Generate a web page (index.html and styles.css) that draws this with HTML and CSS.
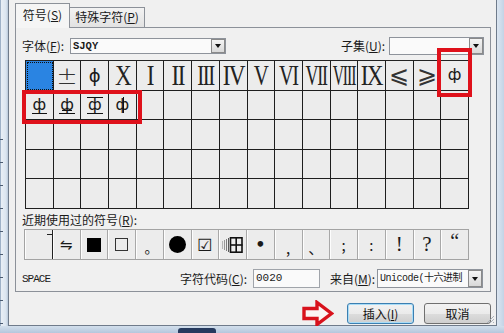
FILE: index.html
```html
<!DOCTYPE html>
<html>
<head>
  <meta charset="utf-8">
  <title>符号</title>
  <link rel="stylesheet" href="styles.css">
</head>
<body>
  <div class="screen">
    <div class="ruler"></div>
    <div class="dialog">
      <div class="tabs">
        <div class="tab active">符号(<u>S</u>)</div>
        <div class="tab">特殊字符(<u>P</u>)</div>
      </div>
      <div class="page">
        <div class="font-row">
          <span class="lbl font-lbl">字体(<u>F</u>):</span>
          <div class="combo font-combo"><span class="combo-text">SJQY</span><span class="combo-btn"></span></div>
          <span class="lbl subset-lbl">子集(<u>U</u>):</span>
          <div class="combo subset-combo"><span class="combo-text"></span><span class="combo-btn"></span></div>
        </div>

        <div class="grid">
          <!-- row 1 -->
          <div class="cell sel"></div>
          <div class="cell"><span class="pm">±</span></div>
          <div class="cell"><span class="sphi">ϕ</span></div>
          <div class="cell"><span class="rn r-x">X</span></div>
          <div class="cell"><span class="rn r1">I</span></div>
          <div class="cell"><span class="rn r2">II</span></div>
          <div class="cell"><span class="rn r3">III</span></div>
          <div class="cell"><span class="rn r4">IV</span></div>
          <div class="cell"><span class="rn r5">V</span></div>
          <div class="cell"><span class="rn r6">VI</span></div>
          <div class="cell"><span class="rn r7">VII</span></div>
          <div class="cell"><span class="rn r8">VIII</span></div>
          <div class="cell"><span class="rn r9">IX</span></div>
          <div class="cell"><span class="cmp">⩽</span></div>
          <div class="cell"><span class="cmp">⩾</span></div>
          <div class="cell"><span class="phi">ф</span></div>
          <!-- row 2 -->
          <div class="cell"><span class="phi base">ф</span></div>
          <div class="cell"><span class="phi base bar">ф</span></div>
          <div class="cell"><span class="phi base top">ф</span></div>
          <div class="cell"><span class="phi dbl">ф</span></div>
          <div class="cell"></div><div class="cell"></div><div class="cell"></div><div class="cell"></div>
          <div class="cell"></div><div class="cell"></div><div class="cell"></div><div class="cell"></div>
          <div class="cell"></div><div class="cell"></div><div class="cell"></div><div class="cell"></div>
          <!-- rows 3-5 -->
          <div class="cell"></div><div class="cell"></div><div class="cell"></div><div class="cell"></div>
          <div class="cell"></div><div class="cell"></div><div class="cell"></div><div class="cell"></div>
          <div class="cell"></div><div class="cell"></div><div class="cell"></div><div class="cell"></div>
          <div class="cell"></div><div class="cell"></div><div class="cell"></div><div class="cell"></div>
          <div class="cell"></div><div class="cell"></div><div class="cell"></div><div class="cell"></div>
          <div class="cell"></div><div class="cell"></div><div class="cell"></div><div class="cell"></div>
          <div class="cell"></div><div class="cell"></div><div class="cell"></div><div class="cell"></div>
          <div class="cell"></div><div class="cell"></div><div class="cell"></div><div class="cell"></div>
          <div class="cell"></div><div class="cell"></div><div class="cell"></div><div class="cell"></div>
          <div class="cell"></div><div class="cell"></div><div class="cell"></div><div class="cell"></div>
          <div class="cell"></div><div class="cell"></div><div class="cell"></div><div class="cell"></div>
          <div class="cell"></div><div class="cell"></div><div class="cell"></div><div class="cell"></div>
        </div>

        <div class="recent-lbl">近期使用过的符号(<u>R</u>):</div>
        <div class="recent">
          <div class="rc first"><span class="corner"></span></div>
          <div class="rc"><span class="harp">⇋</span></div>
          <div class="rc"><span class="sq-fill"></span></div>
          <div class="rc"><span class="sq-open"></span></div>
          <div class="rc"><span class="dot-low">。</span></div>
          <div class="rc"><span class="disc"></span></div>
          <div class="rc"><span class="check">☑</span></div>
          <div class="rc">
            <svg class="tbl" width="21" height="16" viewBox="0 0 21 16">
              <g fill="#333">
                <rect x="0" y="4" width="1" height="8" opacity=".3"/>
                <rect x="2" y="3" width="1" height="10" opacity=".45"/>
                <rect x="4" y="2" width="1" height="12" opacity=".6"/>
                <rect x="6" y="1" width="1" height="14" opacity=".8"/>
              </g>
              <rect x="8.5" y="0.8" width="11.5" height="14.4" fill="none" stroke="#111" stroke-width="1.6"/>
              <line x1="14.2" y1="0" x2="14.2" y2="16" stroke="#111" stroke-width="1.6"/>
              <line x1="8" y1="8" x2="20.5" y2="8" stroke="#111" stroke-width="1.6"/>
            </svg>
          </div>
          <div class="rc"><span class="bullet">•</span></div>
          <div class="rc"><span class="punct low">,</span></div>
          <div class="rc"><span class="punct low">、</span></div>
          <div class="rc"><span class="punct">;</span></div>
          <div class="rc"><span class="punct">:</span></div>
          <div class="rc"><span class="punct big">!</span></div>
          <div class="rc"><span class="punct big">?</span></div>
          <div class="rc"><span class="punct high">“</span></div>
        </div>

        <div class="code-row">
          <span class="char-name">SPACE</span>
          <span class="lbl code-lbl">字符代码(<u>C</u>):</span>
          <div class="field">0020</div>
          <span class="lbl from-lbl">来自(<u>M</u>):</span>
          <div class="combo from-combo"><span class="combo-text">Unicode(十六进制</span><span class="combo-btn"></span></div>
        </div>
      </div>

      <div class="buttons">
        <svg class="arrow" width="32" height="27" viewBox="0 0 32 27">
          <path d="M2 8.5 H15 V2.5 L29.5 13.5 L15 24.5 V18.5 H2 Z" fill="#fbf4f4" stroke="#d8121c" stroke-width="3.4" stroke-linejoin="miter"/>
        </svg>
        <button class="btn default">插入(<u>I</u>)</button>
        <button class="btn">取消</button>
      </div>

      <svg class="grip" width="9" height="9" viewBox="0 0 9 9">
        <path d="M8 1 L1 8 M8 4 L4 8 M8 7 L7 8" stroke="#a9b0b9" stroke-width="1"/>
      </svg>
    </div>
    <div class="frame-right"></div>
  </div>
  <div class="frame-bottom"><span class="blob"></span></div>

  <div class="mark mark-one"></div>
  <div class="mark mark-two"></div>
</body>
</html>
```

FILE: styles.css
```css
body {
  margin: 0;
  width: 504px;
  height: 333px;
  overflow: hidden;
  position: relative;
  background: #c7d6e8;
  font-family: "Noto Sans CJK SC", sans-serif;
  font-size: 12px;
  color: #1a1a1a;
}

u {
  text-decoration: underline;
}

.screen {
  display: flex;
  height: 326px;
}

.ruler {
  width: 8px;
  flex: none;
  background:
    repeating-linear-gradient(to bottom, transparent 0, transparent 22px, #4a5a70 22px, #4a5a70 23px) 0 117px / 3px 100% no-repeat,
    linear-gradient(to right, #9fb2c8 0, #9fb2c8 1px, #e9eff6 1px, #dbe5f0 6px, #b8c8da 8px);
}

.dialog {
  width: 489px;
  flex: none;
  box-sizing: border-box;
  border-left: 1px solid #6f7b8b;
  border-right: 1px solid #6f7b8b;
  border-bottom: 1px solid #6f7b8b;
  background: #f0f0f0;
  position: relative;
}

.frame-right {
  flex: 1;
  background: linear-gradient(to right, #dce6f1, #c3d3e6);
}

.frame-bottom {
  height: 7px;
  position: relative;
  background: linear-gradient(to bottom, #d3dfec, #b4c7dd);
}

.blob {
  position: absolute;
  left: 178px;
  top: 2px;
  width: 38px;
  height: 5px;
  border-radius: 3px 3px 0 0;
  background: #263a5e;
}

/* tabs */
.tabs {
  display: flex;
  align-items: flex-end;
  padding: 3px 0 0 6px;
  height: 24px;
}

.tab {
  box-sizing: border-box;
  height: 20px;
  width: 75px;
  border: 1px solid #8c9199;
  border-left: none;
  border-bottom: none;
  background: linear-gradient(#f3f3f3, #e2e2e2);
  text-align: center;
  line-height: 18px;
}

.tab.active {
  width: 55px;
  height: 25px;
  margin-bottom: -1px;
  border-left: 1px solid #8c9199;
  background: #f5f5f5;
  position: relative;
  z-index: 1;
  line-height: 21px;
}

.page {
  margin-left: 6px;
  width: 476px;
  height: 265px;
  box-sizing: border-box;
  border: 1px solid #8c9199;
  background: #f0f0f0;
}

.lbl {
  flex: none;
  white-space: nowrap;
}

/* combos */
.combo {
  display: flex;
  box-sizing: border-box;
  border: 1px solid #8e939b;
  background: #fafafa;
  flex: none;
}

.combo-text {
  flex: 1;
  overflow: hidden;
  white-space: nowrap;
  padding-left: 2px;
}

.combo-btn {
  width: 14px;
  flex: none;
  box-sizing: border-box;
  border: 1px solid #8a8a8a;
  background: linear-gradient(#f4f4f4, #d9d9d9);
  position: relative;
}

.combo-btn::after {
  content: "";
  position: absolute;
  left: 3px;
  top: 50%;
  margin-top: -2px;
  border-left: 3px solid transparent;
  border-right: 3px solid transparent;
  border-top: 4px solid #111;
}

.font-row {
  display: flex;
  align-items: center;
  margin-top: 9px;
  padding-left: 6px;
  height: 17px;
}

.font-lbl {
  width: 48px;
}

.font-combo {
  width: 156px;
  height: 16px;
  line-height: 14px;
  font-family: "Liberation Mono", monospace;
  font-size: 10.5px;
  font-weight: bold;
}

.subset-lbl {
  margin-left: 115px;
  width: 48px;
}

.subset-combo {
  width: 95px;
  height: 18px;
}

/* symbol grid */
.grid {
  margin: 6px 0 0 9px;
  width: 444px;
  height: 149px;
  box-sizing: border-box;
  display: grid;
  grid-template-columns: repeat(16, minmax(0, 1fr));
  grid-template-rows: repeat(5, minmax(0, 1fr));
  border-left: 1px solid #222;
  border-top: 1px solid #222;
  background: #ececec;
}

.cell {
  border-right: 1px solid #1e1e1e;
  border-bottom: 1px solid #1e1e1e;
  display: flex;
  align-items: center;
  justify-content: center;
  min-width: 0;
}

.cell.sel {
  background: #2a84e2;
  outline: 1px dotted #101010;
  outline-offset: -2px;
}

.pm {
  font-family: "DejaVu Sans", sans-serif;
  font-size: 25px;
  font-weight: 200;
  color: #333;
}

.sphi {
  font-family: "DejaVu Sans", sans-serif;
  font-size: 18px;
}

/* roman numerals: narrow serif, squeezed to fit the cell */
.rn {
  display: inline-block;
  font-family: "Liberation Serif", serif;
  font-size: 29px;
  line-height: 1;
  letter-spacing: -2px;
  color: #222;
  white-space: nowrap;
}

.r-x { transform: scaleX(0.8); }
.r1 { transform: scaleX(0.8); }
.r2 { transform: scaleX(0.8); margin: 0 -2px; }
.r3 { transform: scaleX(0.72); margin: 0 -4px; }
.r4 { transform: scaleX(0.8); margin: 0 -4px; }
.r5 { transform: scaleX(0.72); }
.r6 { transform: scaleX(0.7); margin: 0 -4px; }
.r7 { transform: scaleX(0.62); margin: 0 -8px; }
.r8 { transform: scaleX(0.54); margin: 0 -12px; }
.r9 { transform: scaleX(0.8); margin: 0 -4px; }

.cmp {
  font-family: "DejaVu Sans", sans-serif;
  font-size: 24px;
  font-weight: 200;
  color: #333;
}

.phi {
  position: relative;
  display: inline-block;
  font-family: "DejaVu Sans", sans-serif;
  font-size: 16px;
  line-height: 18px;
  padding: 0 1px;
}

.phi.base::after {
  content: "";
  position: absolute;
  left: 0;
  right: 0;
  bottom: 0;
  border-bottom: 1.5px solid #111;
}

.phi.bar::before {
  content: "";
  position: absolute;
  left: 3px;
  right: 3px;
  bottom: 3px;
  border-bottom: 1.5px solid #111;
}

.phi.top::before {
  content: "";
  position: absolute;
  left: 0;
  right: 0;
  top: 1px;
  border-top: 1.5px solid #111;
}

.phi.dbl::after {
  content: "";
  position: absolute;
  left: 50%;
  margin-left: 1px;
  top: 1px;
  bottom: 1px;
  border-left: 1px solid #111;
}

/* recently used */
.recent-lbl {
  margin-top: 4px;
  padding-left: 6px;
  height: 14px;
  line-height: 14px;
}

.recent {
  margin: 2px 0 0 8px;
  width: 445px;
  height: 31px;
  box-sizing: border-box;
  display: flex;
  border: 1px solid #a3a3a3;
  background: #ececec;
}

.rc {
  flex: 1;
  min-width: 0;
  border-right: 1px solid #a8a8a8;
  box-shadow: inset 1px 0 #fdfdfd;
  display: flex;
  align-items: center;
  justify-content: center;
  position: relative;
  font-family: "DejaVu Sans", sans-serif;
  font-size: 15px;
}

.rc:last-child {
  border-right: none;
}

.rc.first {
  border-right: 1px solid #222;
}

.corner {
  position: absolute;
  right: 0;
  top: 4px;
  width: 5px;
  border-top: 1px solid #222;
}

.harp {
  font-size: 15px;
}

.sq-fill {
  width: 14px;
  height: 14px;
  background: #000;
}

.sq-open {
  width: 13px;
  height: 13px;
  box-sizing: border-box;
  border: 1px solid #333;
}

.dot-low {
  font-family: "Noto Sans CJK SC", sans-serif;
  font-size: 14px;
  margin: 4px 0 0 4px;
}

.disc {
  width: 17px;
  height: 17px;
  border-radius: 50%;
  background: #000;
}

.check {
  font-size: 17px;
}

.bullet {
  font-size: 16px;
  font-weight: bold;
}

.punct {
  font-family: "Noto Sans CJK SC", sans-serif;
  font-size: 15px;
}

.punct.low {
  margin-top: 6px;
}

.punct.big {
  font-family: "Liberation Serif", serif;
  font-size: 21px;
}

.punct.high {
  font-family: "Liberation Serif", serif;
  font-size: 20px;
  margin-top: -6px;
}

/* code row */
.code-row {
  display: flex;
  align-items: center;
  margin-top: 9px;
  padding-left: 6px;
  height: 19px;
}

.char-name {
  width: 158px;
  flex: none;
  font-family: "Liberation Mono", monospace;
  font-size: 11px;
  letter-spacing: -1px;
}

.code-lbl {
  width: 73px;
}

.field {
  width: 67px;
  height: 19px;
  box-sizing: border-box;
  border: 1px solid #a0a4aa;
  background: #fafafa;
  padding-left: 2px;
  line-height: 17px;
  font-family: "Liberation Mono", monospace;
  font-size: 11px;
  flex: none;
}

.from-lbl {
  margin-left: 10px;
  width: 47px;
}

.from-combo {
  width: 106px;
  height: 19px;
  line-height: 17px;
  font-family: "Liberation Mono", "Noto Sans CJK SC", monospace;
  font-size: 10px;
  letter-spacing: -0.5px;
}

/* buttons */
.buttons {
  display: flex;
  justify-content: flex-end;
  align-items: center;
  padding: 8px 5px 0 0;
}

.arrow {
  margin-right: 13px;
}

.btn {
  width: 67px;
  height: 21px;
  margin-left: 10px;
  box-sizing: border-box;
  border: 1px solid #707070;
  border-radius: 3px;
  background: linear-gradient(#f2f2f2, #ebebeb 50%, #dddddd 51%, #cfcfcf);
  font-family: "Noto Sans CJK SC", sans-serif;
  font-size: 12px;
  color: #111;
  padding: 0;
}

.btn.default {
  margin-left: 0;
  border-color: #3c7fb1;
  box-shadow: inset 0 0 0 1px #a8dcf7;
}

.grip {
  position: absolute;
  right: 1px;
  bottom: 1px;
}

/* red annotation boxes */
.mark {
  position: absolute;
  box-sizing: border-box;
  border: 4px solid #df111b;
}

.mark-one {
  left: 437px;
  top: 48px;
  width: 35px;
  height: 49px;
}

.mark-two {
  left: 22px;
  top: 90px;
  width: 120px;
  height: 34px;
}
```
